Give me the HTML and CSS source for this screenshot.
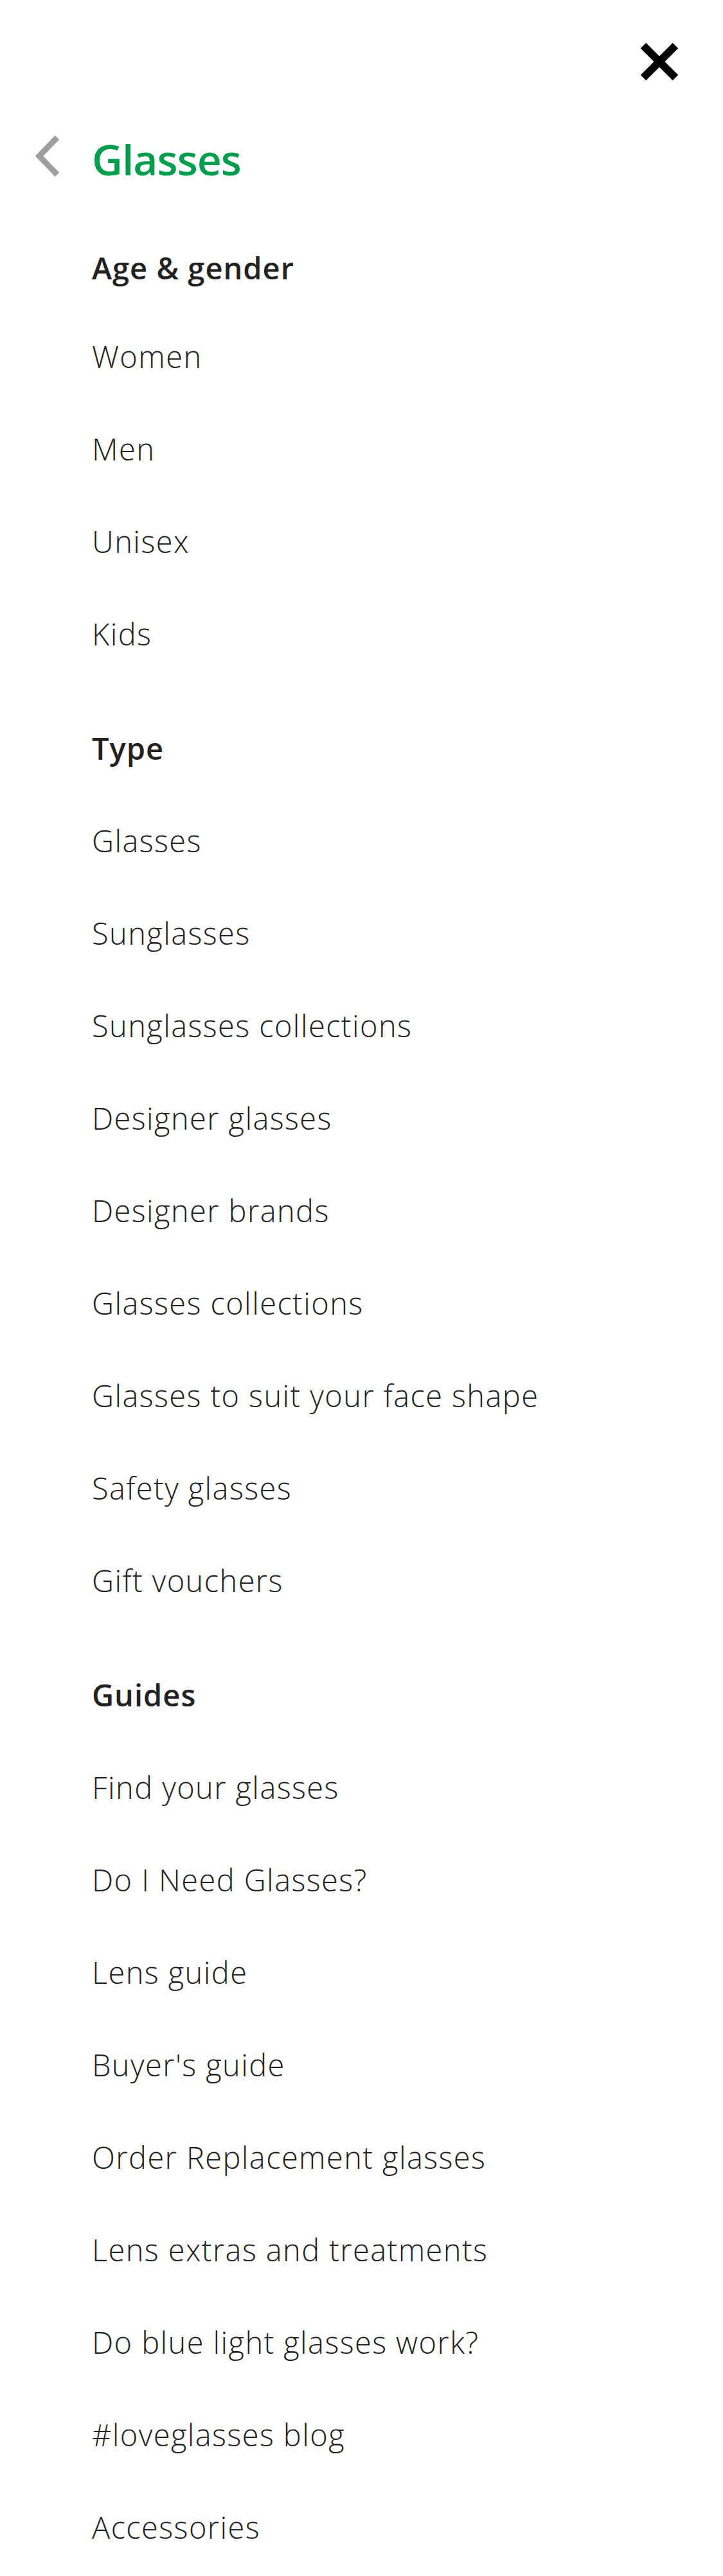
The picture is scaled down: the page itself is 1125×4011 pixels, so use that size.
FILE: index.html
```html
<!DOCTYPE html>
<html lang="en">
<head>
    <meta charset="UTF-8">
    <meta name="viewport" content="width=device-width, initial-scale=1.0">
    <title>Glasses menu</title>
    <link rel="stylesheet" href="styles.css">
</head>
<body>
    <header class="top-bar">
        <button class="close-btn" aria-label="Close">
            <svg width="60" height="60" viewBox="0 0 60 60">
                <path d="M5 5 L55 55 M55 5 L5 55" stroke="#000" stroke-width="12" fill="none"/>
            </svg>
        </button>
    </header>

    <div class="menu-title">
        <a class="back-link" href="#" aria-label="Back">
            <svg width="40" height="64" viewBox="0 0 40 64">
                <path d="M35 3 L7 32 L35 61" stroke="#9e9e9e" stroke-width="9" fill="none"/>
            </svg>
        </a>
        <h2>Glasses</h2>
    </div>

    <nav class="menu">
        <section class="menu-group">
            <h3>Age &amp; gender</h3>
            <ul>
                <li><a href="#">Women</a></li>
                <li><a href="#">Men</a></li>
                <li><a href="#">Unisex</a></li>
                <li><a href="#">Kids</a></li>
            </ul>
        </section>
        <section class="menu-group">
            <h3>Type</h3>
            <ul>
                <li><a href="#">Glasses</a></li>
                <li><a href="#">Sunglasses</a></li>
                <li><a href="#">Sunglasses collections</a></li>
                <li><a href="#">Designer glasses</a></li>
                <li><a href="#">Designer brands</a></li>
                <li><a href="#">Glasses collections</a></li>
                <li><a href="#">Glasses to suit your face shape</a></li>
                <li><a href="#">Safety glasses</a></li>
                <li><a href="#">Gift vouchers</a></li>
            </ul>
        </section>
        <section class="menu-group">
            <h3>Guides</h3>
            <ul>
                <li><a href="#">Find your glasses</a></li>
                <li><a href="#">Do I Need Glasses?</a></li>
                <li><a href="#">Lens guide</a></li>
                <li><a href="#">Buyer's guide</a></li>
                <li><a href="#">Order Replacement glasses</a></li>
                <li><a href="#">Lens extras and treatments</a></li>
                <li><a href="#">Do blue light glasses work?</a></li>
                <li><a href="#">#loveglasses blog</a></li>
                <li><a href="#">Accessories</a></li>
            </ul>
        </section>
    </nav>
</body>
</html>
```

FILE: styles.css
```css
body {
    font-family: "Open Sans", "Noto Sans", sans-serif;
    background-color: #fff;
    color: #222;
    margin: 0;
    padding: 0;
}
.top-bar {
    display: flex;
    justify-content: flex-end;
    padding: 66px 69px 0 0;
    height: 136px;
}
.close-btn {
    background: none;
    border: 0;
    padding: 0;
    width: 60px;
    height: 60px;
    cursor: pointer;
}
.close-btn svg {
    display: block;
}
.menu-title {
    display: flex;
    align-items: center;
    height: 90px;
    padding-left: 54px;
}
.back-link {
    display: block;
    width: 40px;
    height: 64px;
    margin-bottom: 8px;
}
.back-link svg {
    display: block;
}
.menu-title h2 {
    margin: 0 0 0 49px;
    font-size: 66px;
    line-height: 90px;
    font-weight: 600;
    letter-spacing: -1px;
    color: #009d4f;
}
.menu {
    padding: 59px 0 0 143px;
}
.menu-group + .menu-group {
    margin-top: 34px;
}
.menu-group h3 {
    margin: 0;
    font-size: 47px;
    line-height: 144px;
    font-weight: 600;
    letter-spacing: 1px;
}
.menu-group:first-child h3 {
    line-height: 132px;
}
.menu-group ul {
    list-style: none;
    margin: 0;
    padding: 0;
}
.menu-group li a {
    display: block;
    font-size: 47px;
    line-height: 144px;
    font-weight: 300;
    letter-spacing: 1.4px;
    color: #222;
    text-decoration: none;
}
```
